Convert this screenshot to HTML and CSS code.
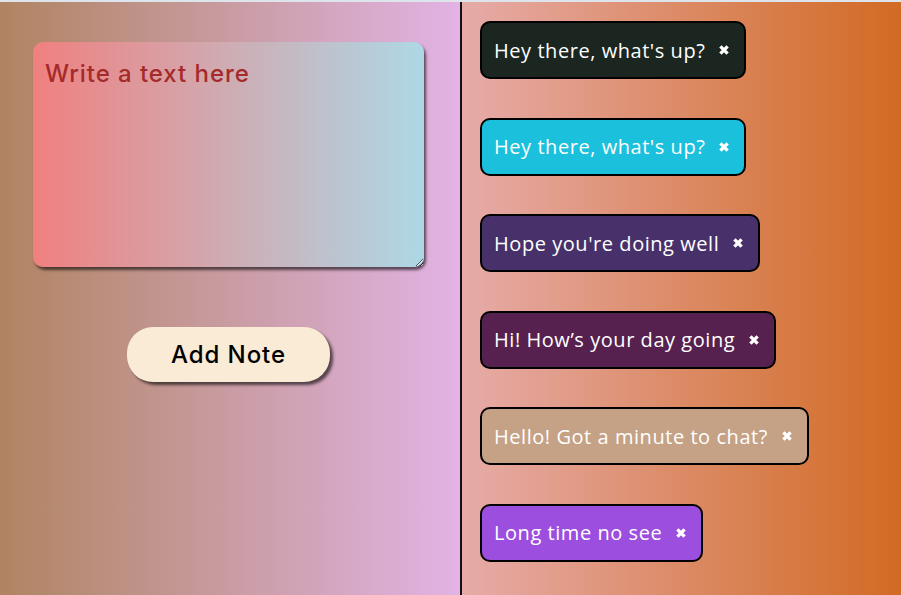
FILE: index.html
```html
<!DOCTYPE html>
<html lang="en">
<head>
<meta charset="utf-8">
<title>Notes</title>
<link rel="stylesheet" href="styles.css">
</head>
<body>
<div class="app">
  <section class="left">
    <textarea class="input" placeholder="Write a text here"></textarea>
    <button class="add">Add Note</button>
  </section>
  <section class="right">
    <div class="note c1"><span>Hey there, what's up?</span><svg class="x" viewBox="0 0 10 10"><path d="M2 2L8 8M8 2L2 8"/></svg></div>
    <div class="note c2"><span>Hey there, what's up?</span><svg class="x" viewBox="0 0 10 10"><path d="M2 2L8 8M8 2L2 8"/></svg></div>
    <div class="note c3"><span>Hope you're doing well</span><svg class="x" viewBox="0 0 10 10"><path d="M2 2L8 8M8 2L2 8"/></svg></div>
    <div class="note c4"><span>Hi! How’s your day going</span><svg class="x" viewBox="0 0 10 10"><path d="M2 2L8 8M8 2L2 8"/></svg></div>
    <div class="note c5"><span>Hello! Got a minute to chat?</span><svg class="x" viewBox="0 0 10 10"><path d="M2 2L8 8M8 2L2 8"/></svg></div>
    <div class="note c6"><span>Long time no see</span><svg class="x" viewBox="0 0 10 10"><path d="M2 2L8 8M8 2L2 8"/></svg></div>
  </section>
</div>
</body>
</html>
```
FILE: styles.css
```css
* { box-sizing: border-box; }
html, body { margin: 0; padding: 0; height: 100%; }
body {
  font-family: "Open Sans", "Noto Sans", sans-serif;
  overflow: hidden;
}
.app {
  display: flex;
  height: 595px;
  border-top: 2px solid #dde4ec;
}
.left {
  width: 462px;
  flex: none;
  background: linear-gradient(to right, #b08461, #e2b3e4);
  border-right: 2px solid #111;
  display: flex;
  flex-direction: column;
  align-items: flex-start;
  padding: 40px 0 0 33px;
  gap: 60px;
}
.input {
  width: 391px;
  height: 225px;
  border: none;
  border-radius: 10px;
  background: linear-gradient(to right, #f08080, #add8e6);
  box-shadow: 2px 3px 3px rgba(0,0,0,0.6);
  padding: 17px 12px;
  font-family: "Inter", "Open Sans", sans-serif;
  font-size: 24px;
  font-weight: 500;
  letter-spacing: 0.95px;
  color: #222;
  outline: none;
  resize: both;
}
.input::placeholder { color: #a52a2a; }
.add {
  width: 203px;
  height: 55px;
  margin-left: 94px;
  border: none;
  border-radius: 26px;
  background: #faebd7;
  box-shadow: 3px 3px 3px rgba(0,0,0,0.6);
  font-family: "Inter", "Open Sans", sans-serif;
  font-size: 24px;
  font-weight: 500;
  letter-spacing: 0.9px;
  color: #000;
}
.right {
  flex: 1;
  background: linear-gradient(to right, #e6aba8, #d26a23);
  display: flex;
  flex-direction: column;
  align-items: flex-start;
  padding: 19px 18px;
  gap: 38.5px;
}
.note {
  display: flex;
  align-items: center;
  gap: 13px;
  height: 58px;
  padding: 0 14px 0 12px;
  border: 2px solid #000;
  border-radius: 10px;
  color: #fff;
  font-size: 20px;
  letter-spacing: 0.55px;
}
.x { width: 12px; height: 12px; fill: none; stroke: #fff; stroke-width: 2.8; flex: none; }
.c1 { background: #1a261f; }
.c2 { background: #1bc0dc; }
.c3 { background: #48316a; }
.c4 { background: #57214f; }
.c5 { background: #c5a285; }
.c6 { background: #9c4edf; }
```
